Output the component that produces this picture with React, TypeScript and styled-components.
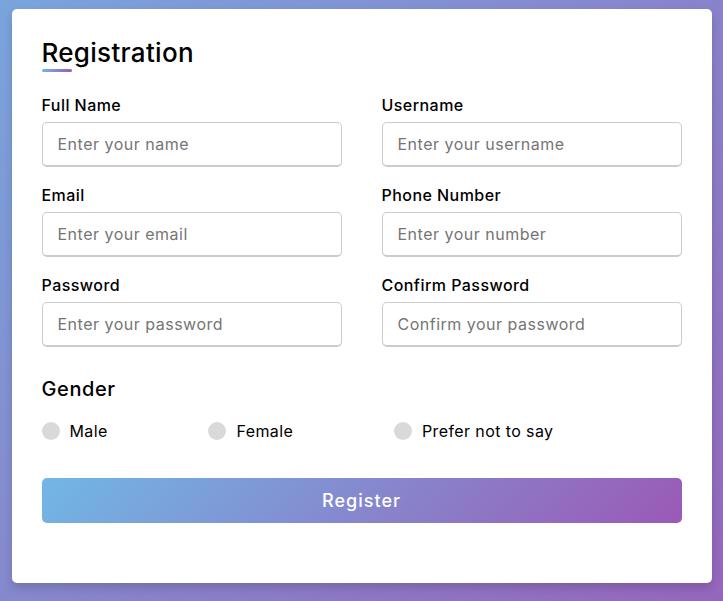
import React from "react";
import styled, { createGlobalStyle } from "styled-components";

const GlobalStyle = createGlobalStyle`
  * { box-sizing: border-box; margin: 0; padding: 0; }
  html, body { height: 100%; }
  body {
    min-height: 100vh;
    background: linear-gradient(135deg, #71b7e6 -30%, #9b59b6 121%);
    font-family: Inter, "Noto Sans", sans-serif;
  }
`;

const Page = styled.div`
  display: flex;
  justify-content: center;
  padding-top: 9px;
`;

const Card = styled.div`
  width: 700px;
  background: #fff;
  padding: 25px 30px;
  border-radius: 5px;
  box-shadow: 0 5px 10px rgba(0, 0, 0, 0.15);
`;

const Title = styled.h1`
  position: relative;
  font-size: 26px;
  font-weight: 500;
  letter-spacing: 0.3px;
  line-height: 38px;
  height: 38px;
  color: #000;
  &::before {
    content: "";
    position: absolute;
    left: 0;
    bottom: 0;
    width: 30px;
    height: 3px;
    border-radius: 5px;
    background: linear-gradient(135deg, #71b7e6, #9b59b6);
  }
`;

const Form = styled.form`
  display: flex;
  flex-direction: column;
`;

const Details = styled.div`
  display: grid;
  grid-template-columns: 300px 300px;
  justify-content: space-between;
  row-gap: 16px;
  margin-top: 21px;
`;

const Field = styled.div`
  display: flex;
  flex-direction: column;
`;

const Label = styled.span`
  display: block;
  font-size: 16px;
  font-weight: 500;
  letter-spacing: 0.45px;
  line-height: 24px;
  margin-bottom: 5px;
  color: #000;
`;

const Input = styled.input`
  height: 45px;
  width: 100%;
  outline: none;
  font-family: inherit;
  font-size: 16px;
  letter-spacing: 0.5px;
  border-radius: 5px;
  padding-left: 15px;
  border: 1px solid #ccc;
  border-bottom-width: 2px;
  background: #fff;
  &::placeholder {
    color: #757575;
  }
`;

const GenderTitle = styled.div`
  font-size: 20px;
  font-weight: 500;
  letter-spacing: 0.6px;
  line-height: 30px;
  margin-top: 27px;
  color: #000;
`;

const Category = styled.div`
  display: flex;
  justify-content: space-between;
  width: 80%;
  margin-top: 15px;
`;

const Option = styled.label`
  display: flex;
  align-items: center;
  font-size: 16px;
  letter-spacing: 0.4px;
  line-height: 24px;
  color: #000;
  cursor: pointer;
`;

const Dot = styled.span`
  width: 18px;
  height: 18px;
  border-radius: 50%;
  background: #d9d9d9;
  margin-right: 10px;
`;

const Button = styled.button`
  height: 45px;
  margin-top: 35px;
  margin-bottom: 35px;
  width: 100%;
  border: none;
  border-radius: 5px;
  color: #fff;
  font-family: inherit;
  font-size: 18px;
  font-weight: 500;
  letter-spacing: 1px;
  background: linear-gradient(135deg, #71b7e6, #9b59b6);
  cursor: pointer;
`;

const fields = [
  { label: "Full Name", ph: "Enter your name" },
  { label: "Username", ph: "Enter your username" },
  { label: "Email", ph: "Enter your email" },
  { label: "Phone Number", ph: "Enter your number" },
  { label: "Password", ph: "Enter your password" },
  { label: "Confirm Password", ph: "Confirm your password" },
];

export default function App() {
  return (
    <>
      <GlobalStyle />
      <Page>
        <Card>
          <Title>Registration</Title>
          <Form onSubmit={(e) => e.preventDefault()}>
            <Details>
              {fields.map((f) => (
                <Field key={f.label}>
                  <Label>{f.label}</Label>
                  <Input type="text" placeholder={f.ph} />
                </Field>
              ))}
            </Details>
            <GenderTitle>Gender</GenderTitle>
            <Category>
              {["Male", "Female", "Prefer not to say"].map((g) => (
                <Option key={g}>
                  <Dot />
                  {g}
                </Option>
              ))}
            </Category>
            <Button type="submit">Register</Button>
          </Form>
        </Card>
      </Page>
    </>
  );
}
